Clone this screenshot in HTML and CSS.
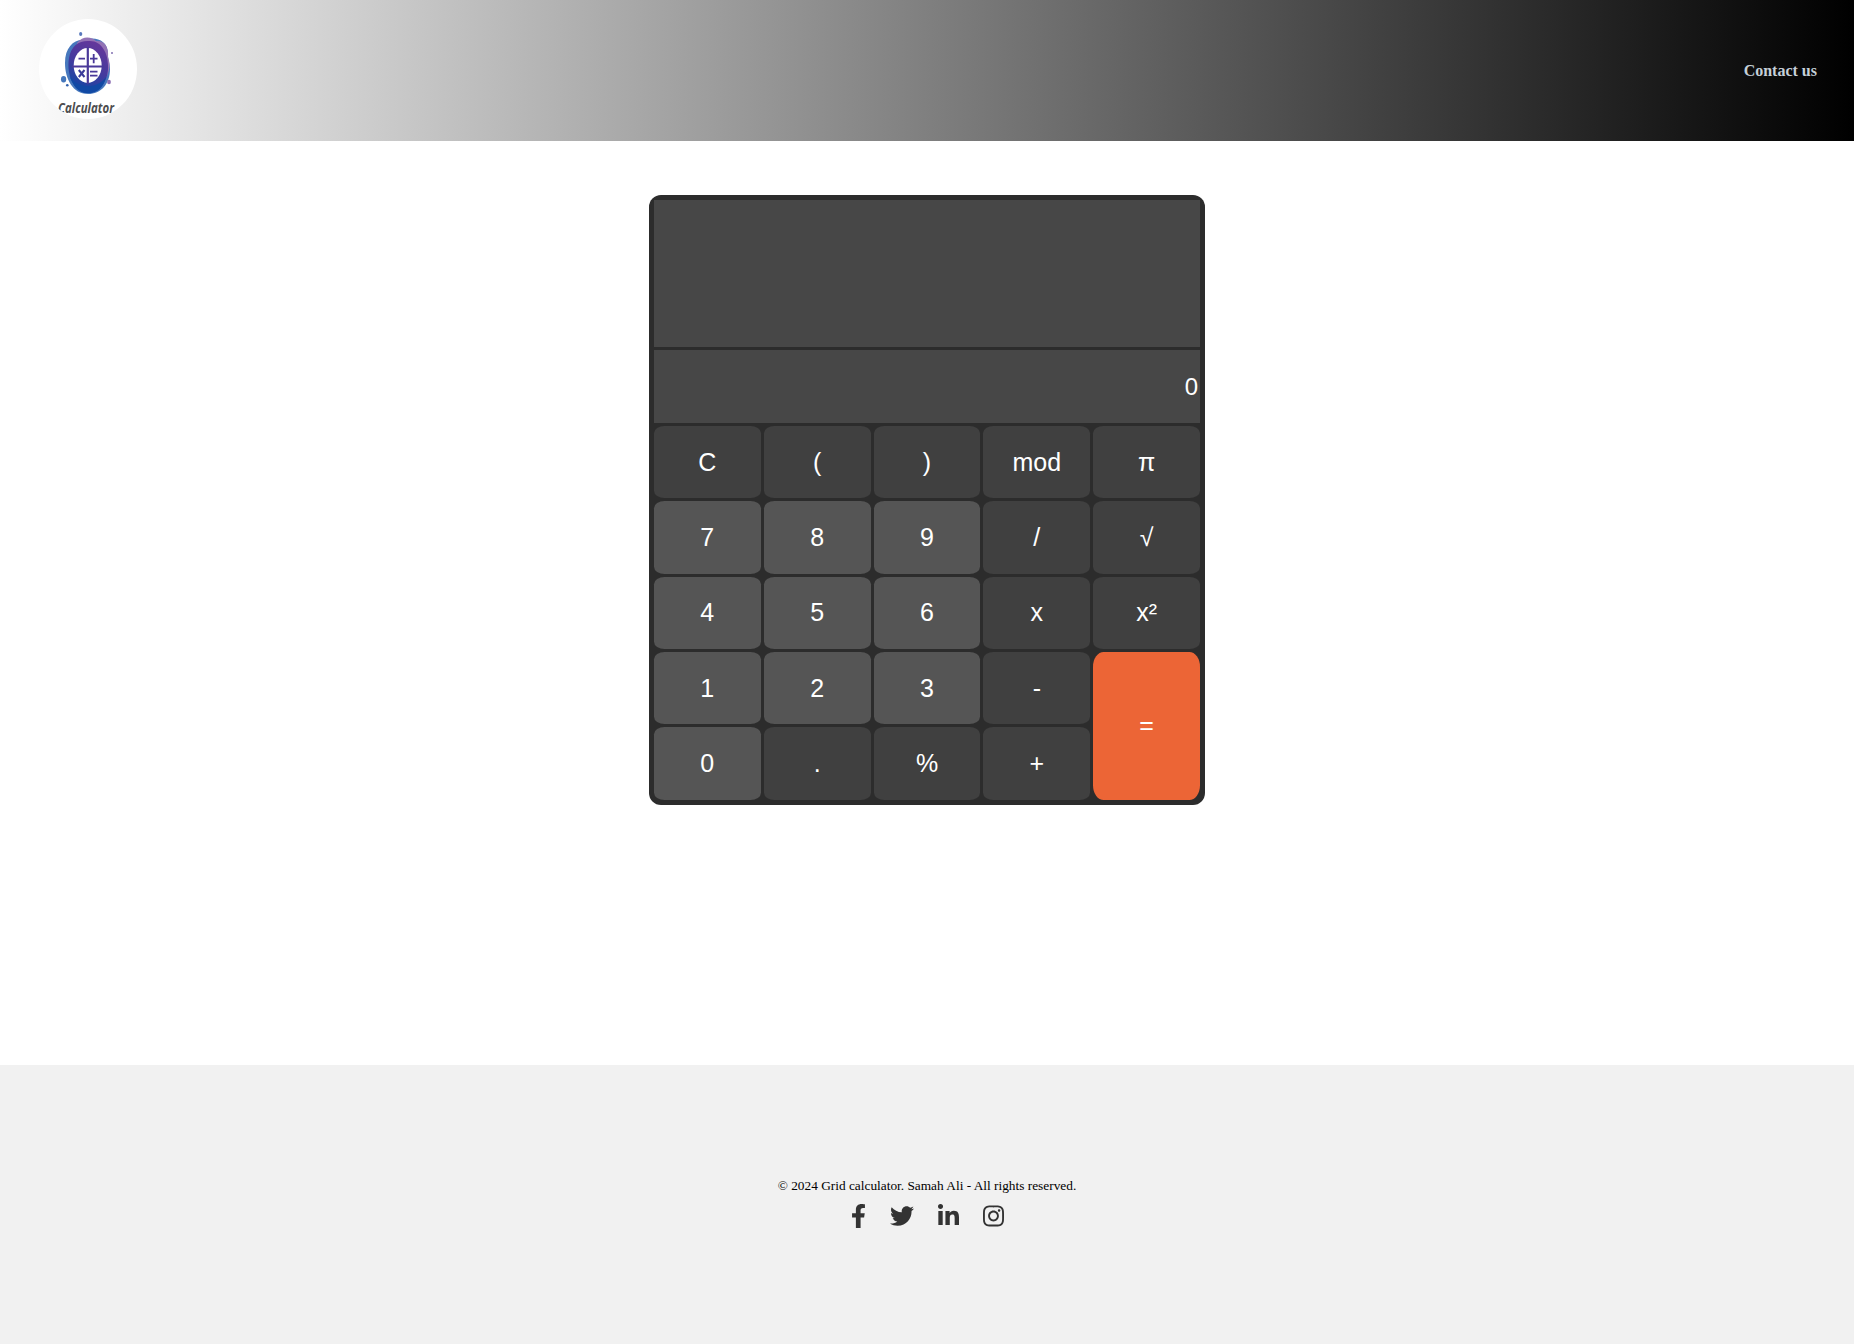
FILE: index.html
```html
<!DOCTYPE html>
<html lang="en">
<head>
<meta charset="utf-8">
<title>Grid calculator</title>
<link rel="stylesheet" href="styles.css">
</head>
<body>
<header class="header">
  <svg class="logo" viewBox="0 0 98 100" role="img" aria-label="Calculator">
    <defs>
      <clipPath id="disc"><ellipse cx="49" cy="50" rx="49" ry="50"/></clipPath>
      <linearGradient id="ink" x1="0.7" y1="0" x2="0.3" y2="1">
        <stop offset="0" stop-color="#66379b"/>
        <stop offset="0.5" stop-color="#443b9e"/>
        <stop offset="1" stop-color="#0d47a5"/>
      </linearGradient>
    </defs>
    <g clip-path="url(#disc)">
      <rect width="98" height="100" fill="#fff"/>
      <path d="M26 44C26 28 35 20 45 21C55 17 69 20 69 35C69 43 71 43 71 50C71 65 62 75 49 75C34 75 26 60 26 44Z" fill="#4778bd"/>
      <path d="M38 24C44 16 53 18 57 22C66 21 70 29 69 38C72 46 70 52 68 57L60 65L38 40Z" fill="#9373b5"/>
      <path d="M30 39C32 26 41 21 51 22C63 22 69 35 69 46C70 61 61 74 49 74C36 74 27 57 30 39Z" fill="url(#ink)"/>
      <path d="M30 55C34 68 56 73 67 58C65 69 57 75 48 74C39 74 33 66 30 55Z" fill="#1149a4"/>
      <ellipse cx="48.7" cy="46.5" rx="14" ry="17.5" fill="#fff"/>
      <path d="M48.8 28V65M33 47.5H65" stroke="#4a3999" stroke-width="2.2"/>
      <path d="M39.5 39.6H46M51 39.6H58.5M54.700 35V44.300M51 52.700H58.500M51 56.700H58.500" stroke="#4a3999" stroke-width="1.8"/>
      <path d="M39.800 51L45.500 58M45.500 51L39.800 58" stroke="#3b3b99" stroke-width="2"/>
      <ellipse cx="41.700" cy="15" rx="1.600" ry="2.100" fill="#5879bd"/>
      <ellipse cx="24.600" cy="60.200" rx="2.600" ry="3.300" fill="#4577bb"/>
      <circle cx="28.300" cy="66.200" r="1.300" fill="#3262ad"/>
      <ellipse cx="70" cy="63" rx="1.900" ry="2.300" fill="#8e72b5"/>
      <circle cx="73" cy="34" r="1" fill="#8270b2"/>
      <text class="logo-name" x="19" y="94" textLength="56" lengthAdjust="spacingAndGlyphs">Calculator</text>
    </g>
  </svg>
  <a class="contact">Contact us</a>
</header>
<main class="main">
  <div class="calculator">
    <div class="screen history"></div>
    <div class="screen entry">0</div>
    <button class="key">C</button><button class="key">(</button><button class="key">)</button><button class="key">mod</button><button class="key">π</button>
    <button class="key digit">7</button><button class="key digit">8</button><button class="key digit">9</button><button class="key">/</button><button class="key">√</button>
    <button class="key digit">4</button><button class="key digit">5</button><button class="key digit">6</button><button class="key">x</button><button class="key">x²</button>
    <button class="key digit">1</button><button class="key digit">2</button><button class="key digit">3</button><button class="key">-</button><button class="key equals">=</button>
    <button class="key digit">0</button><button class="key">.</button><button class="key">%</button><button class="key">+</button>
  </div>
</main>
<footer class="footer">
  <p class="copyright">© 2024 Grid calculator. Samah Ali - All rights reserved.</p>
  <div class="social">
    <svg class="icon" width="15" height="24" viewBox="0 0 320 512"><path d="M279.14 288l14.22-92.66h-88.91v-60.13c0-25.35 12.42-50.06 52.24-50.06h40.42V6.26S260.43 0 225.36 0c-73.22 0-121.08 44.38-121.08 124.72v70.62H22.89V288h81.39v224h100.17V288z"/></svg>
    <svg class="icon" width="24" height="24" viewBox="0 0 512 512"><path d="M459.37 151.716c.325 4.548.325 9.097.325 13.645 0 138.72-105.583 298.558-298.558 298.558-59.452 0-114.68-17.219-161.137-47.106 8.447.974 16.568 1.299 25.34 1.299 49.055 0 94.213-16.568 130.274-44.832-46.132-.975-84.792-31.188-98.112-72.772 6.498.974 12.995 1.624 19.818 1.624 9.421 0 18.843-1.3 27.614-3.573-48.081-9.747-84.143-51.98-84.143-102.985v-1.299c13.969 7.797 30.214 12.67 47.431 13.319-28.264-18.843-46.781-51.005-46.781-87.391 0-19.492 5.197-37.36 14.294-52.954 51.655 63.675 129.3 105.258 216.365 109.807-1.624-7.797-2.599-15.918-2.599-24.04 0-57.828 46.782-104.934 104.934-104.934 30.213 0 57.502 12.67 76.67 33.137 23.715-4.548 46.456-13.32 66.599-25.34-7.798 24.366-24.366 44.833-46.132 57.827 21.117-2.273 41.584-8.122 60.426-16.243-14.292 20.791-32.161 39.308-52.628 54.253z"/></svg>
    <svg class="icon" width="21" height="24" viewBox="0 0 448 512"><path d="M100.28 448H7.4V148.9h92.88zM53.79 108.1C24.09 108.1 0 83.5 0 53.8a53.79 53.79 0 0 1 107.58 0c0 29.7-24.1 54.3-53.79 54.3zM447.9 448h-92.68V302.4c0-34.7-.7-79.2-48.29-79.2-48.29 0-55.69 37.7-55.69 76.7V448h-92.78V148.9h89.08v40.8h1.3c12.4-23.5 42.69-48.3 87.88-48.3 94 0 111.28 61.9 111.28 142.3V448z"/></svg>
    <svg class="icon" width="21" height="24" viewBox="0 0 448 512"><path d="M224.1 141c-63.6 0-114.9 51.3-114.9 114.9s51.3 114.9 114.9 114.9S339 319.5 339 255.9 287.7 141 224.1 141zm0 189.6c-41.1 0-74.7-33.5-74.7-74.7s33.5-74.7 74.7-74.7 74.7 33.5 74.7 74.7-33.6 74.700-74.700 74.700zm146.400-194.300c0 14.900-12 26.800-26.800 26.800-14.900 0-26.800-12-26.800-26.800s12-26.800 26.800-26.800 26.800 12 26.800 26.800zm76.100 27.200c-1.700-35.900-9.900-67.700-36.200-93.900-26.200-26.200-58-34.400-93.900-36.200-37-2.100-147.900-2.100-184.900 0-35.800 1.700-67.600 9.900-93.900 36.100s-34.400 58-36.200 93.900c-2.100 37-2.100 147.900 0 184.900 1.700 35.900 9.900 67.700 36.200 93.900s58 34.400 93.900 36.200c37 2.100 147.900 2.100 184.900 0 35.900-1.700 67.700-9.900 93.900-36.200 26.200-26.200 34.400-58 36.200-93.900 2.100-37 2.100-147.800 0-184.800zM398.800 388c-7.800 19.600-22.900 34.700-42.600 42.600-29.500 11.700-99.500 9-132.100 9s-102.700 2.600-132.100-9c-19.600-7.800-34.700-22.900-42.600-42.600-11.700-29.500-9-99.500-9-132.100s-2.600-102.700 9-132.100c7.800-19.600 22.900-34.700 42.600-42.600 29.500-11.700 99.500-9 132.100-9s102.700-2.600 132.100 9c19.600 7.800 34.700 22.900 42.600 42.600 11.700 29.500 9 99.500 9 132.100s2.700 102.700-9 132.100z"/></svg>
  </div>
</footer>
</body>
</html>
```
FILE: styles.css
```css
* { box-sizing: border-box; }

body {
  margin: 0;
  min-height: 100vh;
  display: flex;
  flex-direction: column;
  font-family: "Liberation Serif", "Times New Roman", serif;
  background: #fff;
}

.header {
  height: 141px;
  padding: 19px 37px 22px 39px;
  display: flex;
  justify-content: space-between;
  align-items: center;
  background: linear-gradient(to right, #fff, #000);
}

.logo { width: 98px; height: 100px; }

.logo-name {
  font: italic 700 15px "Open Sans", "Noto Sans", sans-serif;
  fill: #4d4d4f;
}

.contact {
  padding-top: 3px;
  font-size: 16px;
  font-weight: bold;
  color: #c5d0d8;
}

.main {
  flex: 1;
  display: flex;
  justify-content: center;
  align-items: flex-start;
  padding-top: 53.7px;
}

.calculator {
  width: 30%;
  height: 610px;
  padding: 5px;
  display: grid;
  grid-template-columns: repeat(5, 1fr);
  grid-template-rows: repeat(8, minmax(0, 1fr));
  gap: 3px;
  border-radius: 12px;
  background: #2c2c2c;
  color: #fff;
  font: 25px "Liberation Sans", Arial, sans-serif;
}

.screen { grid-column: 1 / -1; background: #474747; }

.history { grid-row: span 2; }

.entry {
  display: flex;
  justify-content: flex-end;
  align-items: center;
  padding: 1px 2px 0 0;
  font-size: 24px;
}

.key {
  min-width: 0;
  padding: 0;
  border: 0;
  border-radius: 10%;
  background: #404040;
  color: inherit;
  font: inherit;
}

.digit { background: #555; }

.equals { grid-area: 7 / 5 / span 2; background: #ec6536; }

.footer {
  height: 279px;
  display: flex;
  flex-direction: column;
  align-items: center;
  padding-top: 113px;
  background: #f1f1f1;
}

.copyright {
  margin: 0;
  font-size: 13.333px;
  line-height: 15px;
  color: #000;
}

.social { display: flex; gap: 24px; margin-top: 11px; }

.icon { fill: #333; }
```
